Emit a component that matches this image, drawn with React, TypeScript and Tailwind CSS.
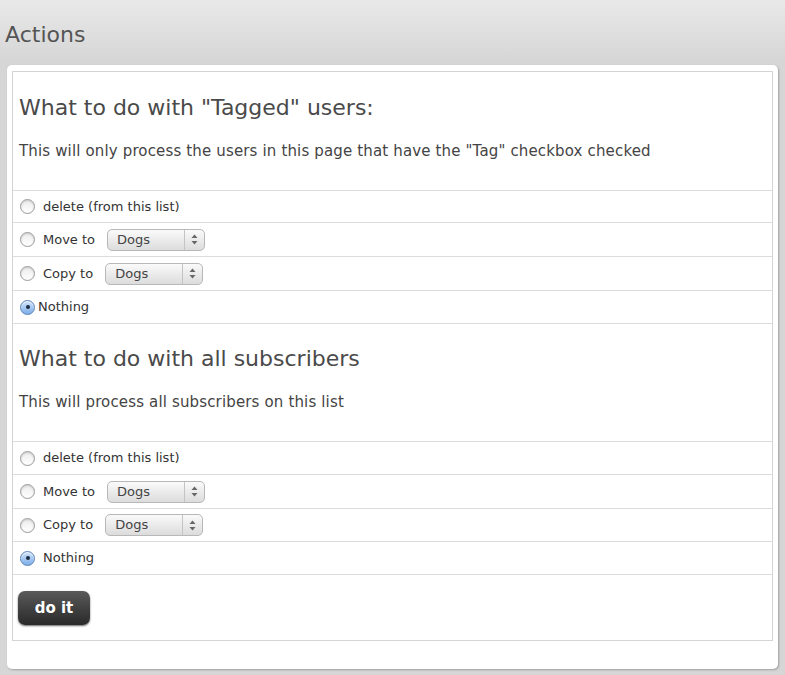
import React from "react";

const headFont = { fontFamily: '"DejaVu Sans", Verdana, sans-serif' };

function Radio({ checked }: { checked?: boolean }) {
  if (checked) {
    return (
      <span className="inline-flex h-[15px] w-[15px] shrink-0 items-center justify-center rounded-full border border-[#5b82b8] bg-gradient-to-b from-[#cfe3fb] to-[#7eaee8] shadow-[inset_0_1px_1px_rgba(255,255,255,0.8)]">
        <span className="h-[4px] w-[4px] rounded-full bg-[#1c2a3d]" />
      </span>
    );
  }
  return (
    <span className="inline-block h-[15px] w-[15px] shrink-0 rounded-full border border-[#9a9a9a] bg-gradient-to-b from-[#ececec] to-[#ffffff] shadow-[inset_0_1px_2px_rgba(0,0,0,0.15)]" />
  );
}

function Select() {
  return (
    <span className="inline-flex h-[22px] w-[98px] items-center rounded-[5px] border border-[#b8b8b8] bg-gradient-to-b from-[#fafafa] to-[#dcdcdc] text-[13px] text-[#444]">
      <span className="flex-1 pl-[9px]">Dogs</span>
      <span className="flex h-full w-[20px] items-center justify-center border-l border-[#c4c4c4]">
        <svg width="7" height="11" viewBox="0 0 7 11">
          <path d="M3.5 0.5 L6.5 4 L0.5 4 Z" fill="#666" />
          <path d="M3.5 10.5 L6.5 7 L0.5 7 Z" fill="#666" />
        </svg>
      </span>
    </span>
  );
}

function Row({ children, h, last }: { children: React.ReactNode; h: string; last?: boolean }) {
  return (
    <div className={`flex items-center border-t border-[#dcdcdc] pl-[7px] text-[13px] text-[#333] ${h} ${last ? "border-b" : ""}`}>
      {children}
    </div>
  );
}

function Section({
  title,
  desc,
  tight,
  heights,
}: {
  title: string;
  desc: string;
  tight?: boolean;
  heights: string[];
}) {
  return (
    <div>
      <div className="px-[6px]" style={headFont}>
        <h2 className="pt-[20px] text-[22px] leading-[32px] text-[#4a4a4a]">{title}</h2>
        <p className="mt-[17px] pb-[29px] text-[15px] leading-[20px] tracking-[0.15px] text-[#444]">{desc}</p>
      </div>
      <Row h={heights[0]}>
        <Radio />
        <span className="ml-[8px]">delete (from this list)</span>
      </Row>
      <Row h={heights[1]}>
        <Radio />
        <span className="ml-[8px]">Move to</span>
        <span className="ml-[12px]">
          <Select />
        </span>
      </Row>
      <Row h={heights[2]}>
        <Radio />
        <span className="ml-[8px]">Copy to</span>
        <span className="ml-[12px]">
          <Select />
        </span>
      </Row>
      <Row h={heights[3]} last>
        <Radio checked />
        <span className={tight ? "ml-[3px]" : "ml-[8px]"}>Nothing</span>
      </Row>
    </div>
  );
}

export default function App() {
  return (
    <div
      className="min-h-[675px] w-full bg-gradient-to-b from-[#e9e9e9] via-[#d6d6d6] via-[9%] to-[#d6d6d6] pb-[7px]"
      style={{ fontFamily: '"DejaVu Sans", Verdana, sans-serif' }}
    >
      <h1 className="pl-[5px] pt-[19px] text-[22px] leading-[32px] text-[#555]" style={headFont}>
        Actions
      </h1>
      <div className="mx-[7px] mt-[14px] rounded-[5px] bg-white px-[5px] pt-[6px] pb-[28px] shadow-[1px_1px_2px_rgba(0,0,0,0.25)]">
        <div className="border border-[#d4d4d4]">
          <Section
            title={'What to do with "Tagged" users:'}
            desc={'This will only process the users in this page that have the "Tag" checkbox checked'}
            heights={["h-[32px]", "h-[34px]", "h-[34px]", "h-[34px]"]}
            tight
          />
          <div className="-mt-px">
            <Section
              title="What to do with all subscribers"
              desc="This will process all subscribers on this list"
              heights={["h-[33px]", "h-[34px]", "h-[33px]", "h-[34px]"]}
            />
          </div>
          <div className="px-[5px] pt-[16px] pb-[15px]">
            <button className="h-[34px] w-[72px] rounded-[7px] bg-gradient-to-b from-[#5a5a5a] to-[#2a2a2a] text-[15px] font-bold text-white shadow-[0_1px_2px_rgba(0,0,0,0.6)]">
              do it
            </button>
          </div>
        </div>
      </div>
    </div>
  );
}
